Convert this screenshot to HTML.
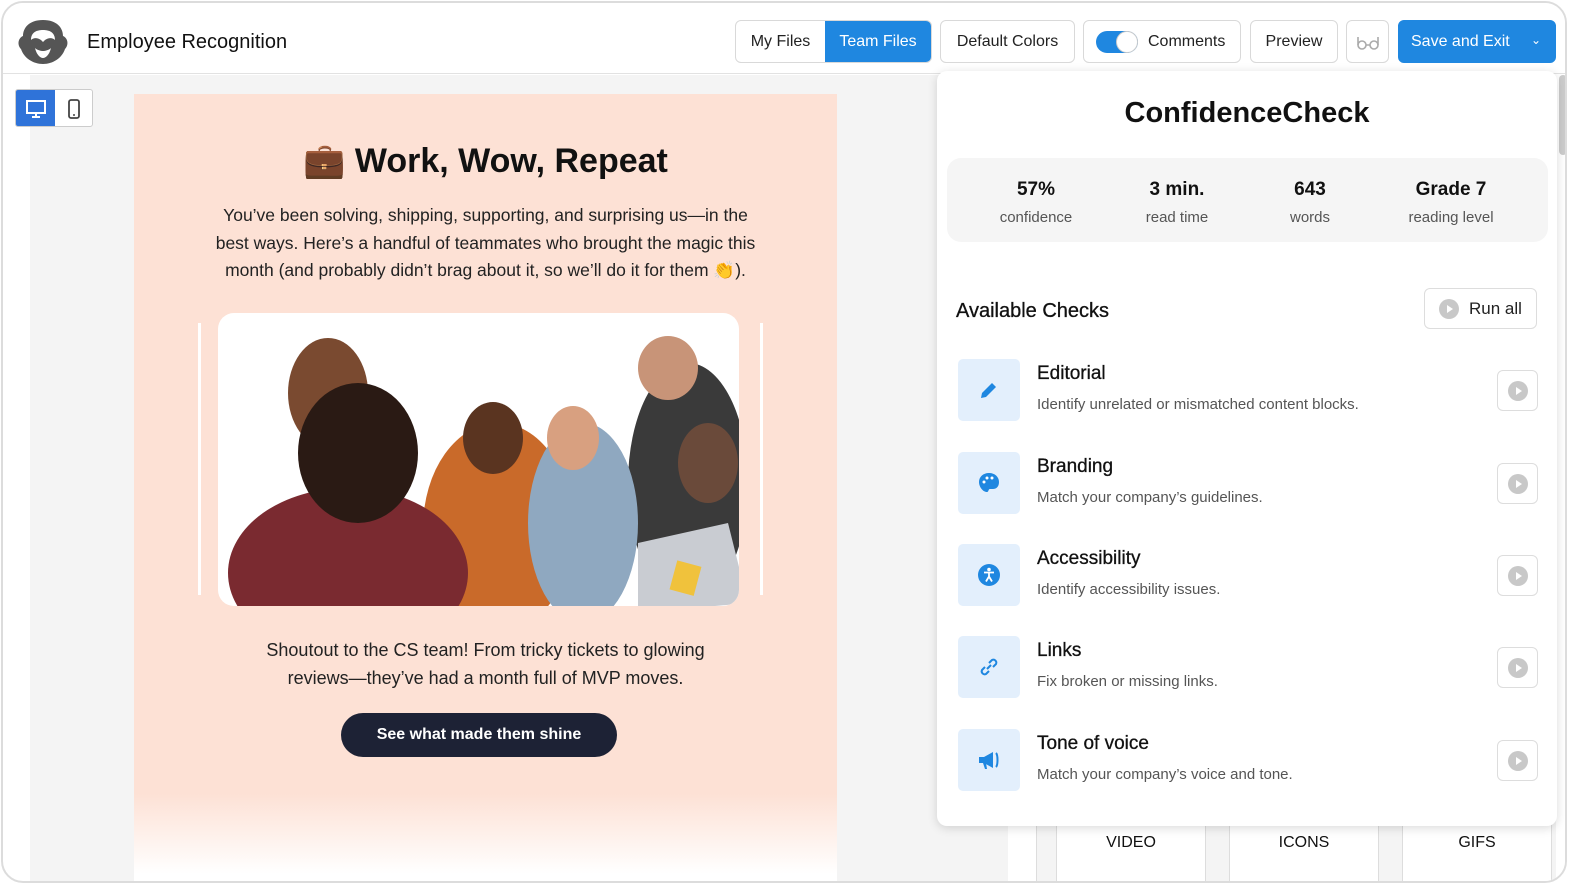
<!DOCTYPE html>
<html><head><meta charset="utf-8"><style>
*{box-sizing:border-box;margin:0;padding:0}
body{width:1584px;height:892px;background:#fff;font-family:"Liberation Sans",sans-serif;color:#111;position:relative;overflow:hidden}
.frame{position:absolute;left:1px;top:1px;width:1566px;height:882px;border:2px solid #dcdcdc;border-radius:22px;overflow:hidden;background:#fff}
.abs{position:absolute}
.btn{position:absolute;top:17px;height:43px;border:1px solid #d9d9d9;border-radius:6px;background:#fff;font-size:16px;color:#222;display:flex;align-items:center;justify-content:center}
.stat{position:absolute;top:176px;width:160px;text-align:center}
.stat b{display:block;font-size:19px;font-weight:bold;color:#111}
.stat span{display:block;font-size:15px;color:#555;margin-top:8px}
.chk{position:absolute;left:955px;width:580px;height:62px}
.chk .ic{position:absolute;left:0;top:0;width:62px;height:62px;background:#e3effc;border-radius:5px;display:flex;align-items:center;justify-content:center}
.chk .t{position:absolute;left:79px;top:4px;font-size:19px;color:#111;-webkit-text-stroke:0.3px #111}
.chk .d{position:absolute;left:79px;top:37px;font-size:15px;color:#555}
.chk .p{position:absolute;left:539px;top:11px;width:41px;height:41px;border:1px solid #ddd;border-radius:6px;display:flex;align-items:center;justify-content:center}
.pl{width:20px;height:20px;border-radius:50%;background:#c8c8c8;position:relative}
.pl:after{content:"";position:absolute;left:8px;top:6px;border-left:6px solid #fff;border-top:4px solid transparent;border-bottom:4px solid transparent}
</style></head><body>
<div class="frame">
<div class="abs" style="left:0;top:0;width:1566px;height:71px;border-bottom:1px solid #e2e2e2;background:#fff"></div>
<svg class="abs" style="left:12px;top:15px" width="56" height="48" viewBox="0 0 56 48"><path d="M28 2C14 2 8 10 8 18 3 20 2 27 6 31 9 40 18 46 28 46 38 46 47 40 50 31 54 27 53 20 48 18 48 10 42 2 28 2Z" fill="#555"/><path d="M16 22C16 14 22 12 28 12 34 12 40 14 40 22 37 19 33 20 30 22L28 24 26 22C23 20 19 19 16 22Z" fill="#fff"/><path d="M20 30C22 38 26 40 28 40 30 40 34 38 36 30 34 32 30 33 28 33 26 33 22 32 20 30Z" fill="#fff"/></svg>
<div class="abs" style="left:84px;top:28px;font-size:20px;color:#111">Employee Recognition</div>
<div class="btn" style="left:732px;width:197px;border-radius:6px;overflow:hidden;justify-content:flex-start"><span style="width:89px;text-align:center">My Files</span><span style="flex:1;height:100%;background:#1f87e0;color:#fff;display:flex;align-items:center;justify-content:center">Team Files</span></div>
<div class="btn" style="left:937px;width:135px">Default Colors</div>
<div class="btn" style="left:1080px;width:158px;justify-content:flex-start;padding-left:12px"><span style="width:42px;height:22px;border-radius:11px;background:#1f87e0;position:relative;margin-right:10px"><span style="position:absolute;right:0;top:0;width:22px;height:22px;border-radius:50%;background:#fff;border:1px solid #ccc"></span></span>Comments</div>
<div class="btn" style="left:1247px;width:88px">Preview</div>
<div class="btn" style="left:1343px;width:43px"><svg width="24" height="16" viewBox="0 0 24 16"><g fill="none" stroke="#aaa" stroke-width="1.6"><circle cx="6" cy="11" r="4"/><circle cx="18" cy="11" r="4"/><path d="M2 11V3M22 11V3M10 11h4"/></g></svg></div>
<div class="btn" style="left:1395px;width:158px;background:#1f87e0;border-color:#1f87e0;color:#fff;justify-content:flex-start;padding-left:12px">Save and Exit<span style="position:absolute;right:14px;top:12px;font-size:12px">&#8964;</span></div>
<div class="abs" style="left:27px;top:72px;width:980px;height:810px;background:#f4f4f4"></div>
<div class="abs" style="left:1005px;top:72px;width:560px;height:810px;background:#fff"></div>
<div class="abs" style="left:1033px;top:800px;width:520px;height:82px;background:#f4f4f4;border-left:1px solid #ddd"></div>
<div class="abs" style="left:1053px;top:800px;width:150px;height:82px;background:#fff;border:1px solid #ddd;text-align:center;padding-top:30px;font-size:16px">VIDEO</div>
<div class="abs" style="left:1226px;top:800px;width:150px;height:82px;background:#fff;border:1px solid #ddd;text-align:center;padding-top:30px;font-size:16px">ICONS</div>
<div class="abs" style="left:1399px;top:800px;width:150px;height:82px;background:#fff;border:1px solid #ddd;text-align:center;padding-top:30px;font-size:16px">GIFS</div>
<div class="abs" style="left:12px;top:86px;width:78px;height:38px;border:1px solid #ccc;border-radius:3px;background:#fff;overflow:hidden">
<div class="abs" style="left:0;top:0;width:39px;height:38px;background:#2f73d9"></div>
<svg class="abs" style="left:10px;top:10px" width="20" height="18"><rect x="1" y="1" width="18" height="12" fill="none" stroke="#fff" stroke-width="2"/><path d="M10 13v4M6 17h8" stroke="#fff" stroke-width="2"/></svg>
<svg class="abs" style="left:52px;top:9px" width="12" height="20"><rect x="1" y="1" width="10" height="18" rx="2" fill="none" stroke="#444" stroke-width="1.8"/><circle cx="6" cy="16" r="1" fill="#444"/></svg>
</div>
<div class="abs" style="left:131px;top:91px;width:703px;height:791px;background:linear-gradient(#fde1d5 0,#fde1d5 700px,#fff 780px)"></div>
<div class="abs" style="left:131px;top:138px;width:703px;text-align:center;font-size:34px;font-weight:bold;color:#111">💼 Work, Wow, Repeat</div>
<div class="abs" style="left:131px;top:199px;width:703px;text-align:center;font-size:17.5px;line-height:27.5px;color:#222;white-space:nowrap">You’ve been solving, shipping, supporting, and surprising us—in the<br>best ways. Here’s a handful of teammates who brought the magic this<br>month (and probably didn’t brag about it, so we’ll do it for them 👏).</div>
<div class="abs" style="left:195px;top:320px;width:3px;height:272px;background:#fff"></div>
<div class="abs" style="left:757px;top:320px;width:3px;height:272px;background:#fff"></div>
<svg class="abs" style="left:215px;top:310px" width="521" height="293" viewBox="0 0 521 293">
<defs><clipPath id="c"><rect width="521" height="293" rx="16"/></clipPath></defs>
<g clip-path="url(#c)"><rect width="521" height="293" fill="#fff"/>
<ellipse cx="110" cy="80" rx="40" ry="55" fill="#7a4a30"/>
<ellipse cx="470" cy="170" rx="60" ry="120" fill="#3a3a3a"/>
<ellipse cx="450" cy="55" rx="30" ry="32" fill="#c89478"/>
<ellipse cx="280" cy="215" rx="75" ry="105" fill="#c96a2a"/>
<ellipse cx="275" cy="125" rx="30" ry="36" fill="#5a3420"/>
<ellipse cx="365" cy="210" rx="55" ry="100" fill="#8fa8c0"/>
<ellipse cx="355" cy="125" rx="26" ry="32" fill="#d8a080"/>
<ellipse cx="490" cy="150" rx="30" ry="40" fill="#6a4a3a"/>
<path d="M420 230l90-20 20 80-110 10z" fill="#c9ccd2"/>
<ellipse cx="130" cy="260" rx="120" ry="85" fill="#7a2a30"/>
<ellipse cx="140" cy="140" rx="60" ry="70" fill="#2a1a14"/>
<rect x="455" y="250" width="25" height="30" fill="#f0c23c" transform="rotate(15 467 265)"/>
</g></svg>
<div class="abs" style="left:131px;top:634px;width:703px;text-align:center;font-size:18px;line-height:27.5px;color:#222">Shoutout to the CS team! From tricky tickets to glowing<br>reviews—they’ve had a month full of MVP moves.</div>
<div class="abs" style="left:338px;top:710px;width:276px;height:44px;border-radius:22px;background:#1d2235;color:#fff;font-size:16px;font-weight:bold;text-align:center;line-height:44px">See what made them shine</div>
<div class="abs" style="left:1556px;top:72px;width:8px;height:80px;background:#ccc;border-radius:4px"></div>
<div class="abs" style="left:934px;top:68px;width:620px;height:755px;background:#fff;border-radius:10px;box-shadow:0 2px 10px rgba(0,0,0,.15)"></div>
<div class="abs" style="left:934px;top:94px;width:620px;text-align:center;font-size:29px;font-weight:bold;color:#111">ConfidenceCheck</div>
<div class="abs" style="left:944px;top:155px;width:601px;height:84px;background:#f5f5f5;border-radius:14px"></div>
<div class="stat" style="left:953px"><b>57%</b><span>confidence</span></div>
<div class="stat" style="left:1094px"><b>3 min.</b><span>read time</span></div>
<div class="stat" style="left:1227px"><b>643</b><span>words</span></div>
<div class="stat" style="left:1368px"><b>Grade 7</b><span>reading level</span></div>
<div class="abs" style="left:953px;top:297px;font-size:20px;color:#111;-webkit-text-stroke:0.3px #111">Available Checks</div>
<div class="abs" style="left:1421px;top:285px;width:113px;height:41px;border:1px solid #ddd;border-radius:6px;display:flex;align-items:center;padding-left:14px;font-size:17px;color:#222"><span class="pl" style="margin-right:10px"></span>Run all</div>
<div class="chk" style="top:356px"><div class="ic"><svg width="22" height="22" viewBox="0 0 22 22"><path d="M3 19l1-5 10-10 4 4-10 10z" fill="#1f87e0"/></svg></div><div class="t">Editorial</div><div class="d">Identify unrelated or mismatched content blocks.</div><div class="p"><span class="pl"></span></div></div>
<div class="chk" style="top:449px"><div class="ic"><svg width="24" height="24" viewBox="0 0 24 24"><path d="M12 2C6 2 2 6 2 11c0 5 4 10 8 10 2 0 1-3 3-3h3c3 0 6-2 6-7 0-5-4-9-10-9z" fill="#1f87e0"/><circle cx="7" cy="11" r="1.5" fill="#fff"/><circle cx="10" cy="7" r="1.5" fill="#fff"/><circle cx="15" cy="7" r="1.5" fill="#fff"/></svg></div><div class="t">Branding</div><div class="d">Match your company’s guidelines.</div><div class="p"><span class="pl"></span></div></div>
<div class="chk" style="top:541px"><div class="ic"><svg width="24" height="24" viewBox="0 0 24 24"><circle cx="12" cy="12" r="11" fill="#1f87e0"/><circle cx="12" cy="6.5" r="1.8" fill="#fff"/><path d="M7 9.5h10M12 9.5v4l-3 5M12 13.5l3 5" stroke="#fff" stroke-width="1.8" fill="none"/></svg></div><div class="t">Accessibility</div><div class="d">Identify accessibility issues.</div><div class="p"><span class="pl"></span></div></div>
<div class="chk" style="top:633px"><div class="ic"><svg width="24" height="24" viewBox="0 0 24 24"><g fill="none" stroke="#1f87e0" stroke-width="2"><path d="M10 14l4-4"/><path d="M8 12l-3 3a3 3 0 004 4l3-3"/><path d="M16 12l3-3a3 3 0 00-4-4l-3 3"/></g></svg></div><div class="t">Links</div><div class="d">Fix broken or missing links.</div><div class="p"><span class="pl"></span></div></div>
<div class="chk" style="top:726px"><div class="ic"><svg width="26" height="24" viewBox="0 0 26 24"><path d="M3 9h5l9-5v16l-9-5H3z" fill="#1f87e0"/><path d="M7 15l2 6h2l-1-6z" fill="#1f87e0"/><path d="M20 5c2 2 2 12 0 14" stroke="#1f87e0" stroke-width="2" fill="none"/></svg></div><div class="t">Tone of voice</div><div class="d">Match your company’s voice and tone.</div><div class="p"><span class="pl"></span></div></div>
</div>
</body></html>
